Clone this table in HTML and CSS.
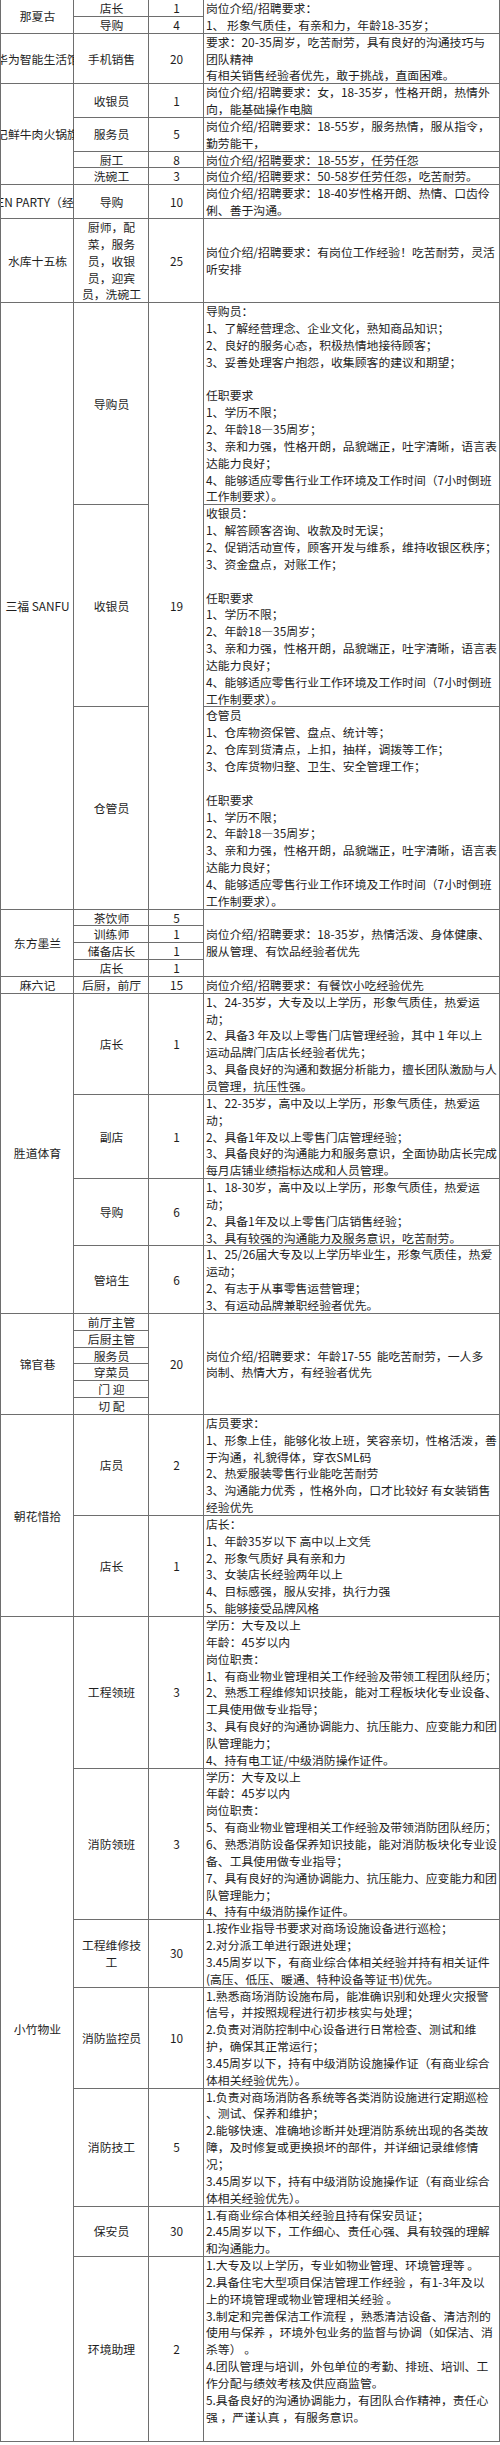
FILE: index.html
```html
<!DOCTYPE html>
<html lang="zh-CN">
<head>
<meta charset="utf-8">
<title>岗位招聘</title>
<link rel="stylesheet" href="styles.css">
</head>
<body>
<table class="jobs">
<colgroup><col class="c-brand"><col class="c-role"><col class="c-num"><col class="c-desc"></colgroup>
<tbody>
<tr>
<td class="brand" rowspan="2"><div class="clip"><span>那夏古</span></div></td>
<td class="role">店长</td><td class="num">1</td>
<td class="desc" rowspan="2">岗位介绍/招聘要求：<br>1、 形象气质佳，有亲和力，年龄18-35岁；</td>
</tr>
<tr><td class="role">导购</td><td class="num">4</td></tr>

<tr>
<td class="brand"><div class="clip"><span>华为智能生活馆</span></div></td>
<td class="role">手机销售</td><td class="num">20</td>
<td class="desc">要求：20-35周岁，吃苦耐劳，具有良好的沟通技巧与<br>团队精神<br>有相关销售经验者优先，敢于挑战，直面困难。</td>
</tr>

<tr>
<td class="brand" rowspan="4"><div class="clip"><span>潮汕记鲜牛肉火锅旗舰店</span></div></td>
<td class="role">收银员</td><td class="num">1</td>
<td class="desc">岗位介绍/招聘要求：女，18-35岁，性格开朗，热情外<br>向，能基础操作电脑</td>
</tr>
<tr>
<td class="role">服务员</td><td class="num">5</td>
<td class="desc">岗位介绍/招聘要求：18-55岁，服务热情，服从指令，<br>勤劳能干，</td>
</tr>
<tr>
<td class="role">厨工</td><td class="num">8</td>
<td class="desc">岗位介绍/招聘要求：18-55岁，任劳任怨</td>
</tr>
<tr>
<td class="role">洗碗工</td><td class="num">3</td>
<td class="desc">岗位介绍/招聘要求：50-58岁任劳任怨，吃苦耐劳。</td>
</tr>

<tr>
<td class="brand"><div class="clip"><span>GOLDEN PARTY（经开店）</span></div></td>
<td class="role">导购</td><td class="num">10</td>
<td class="desc">岗位介绍/招聘要求：18-40岁性格开朗、热情、口齿伶<br>俐、善于沟通。</td>
</tr>

<tr>
<td class="brand"><div class="clip"><span>水库十五栋</span></div></td>
<td class="role">厨师，配<br>菜，服务<br>员，收银<br>员，迎宾<br>员，洗碗工</td><td class="num">25</td>
<td class="desc">岗位介绍/招聘要求：有岗位工作经验！吃苦耐劳，灵活<br>听安排</td>
</tr>

<tr>
<td class="brand" rowspan="3"><div class="clip"><span>三福 SANFU</span></div></td>
<td class="role">导购员</td><td class="num" rowspan="3">19</td>
<td class="desc">导购员：<br>1、了解经营理念、企业文化，熟知商品知识；<br>2、良好的服务心态，积极热情地接待顾客；<br>3、妥善处理客户抱怨，收集顾客的建议和期望；<br><br>任职要求<br>1、学历不限；<br>2、年龄18—35周岁；<br>3、亲和力强，性格开朗，品貌端正，吐字清晰，语言表<br>达能力良好；<br>4、能够适应零售行业工作环境及工作时间（7小时倒班<br>工作制要求）。</td>
</tr>
<tr>
<td class="role">收银员</td>
<td class="desc">收银员：<br>1、解答顾客咨询、收款及时无误；<br>2、促销活动宣传，顾客开发与维系，维持收银区秩序；<br>3、资金盘点，对账工作；<br><br>任职要求<br>1、学历不限；<br>2、年龄18—35周岁；<br>3、亲和力强，性格开朗，品貌端正，吐字清晰，语言表<br>达能力良好；<br>4、能够适应零售行业工作环境及工作时间（7小时倒班<br>工作制要求）。</td>
</tr>
<tr>
<td class="role">仓管员</td>
<td class="desc">仓管员<br>1、仓库物资保管、盘点、统计等；<br>2、仓库到货清点，上扣，抽样，调拨等工作；<br>3、仓库货物归整、卫生、安全管理工作；<br><br>任职要求<br>1、学历不限；<br>2、年龄18—35周岁；<br>3、亲和力强，性格开朗，品貌端正，吐字清晰，语言表<br>达能力良好；<br>4、能够适应零售行业工作环境及工作时间（7小时倒班<br>工作制要求）。</td>
</tr>

<tr>
<td class="brand" rowspan="4"><div class="clip"><span>东方墨兰</span></div></td>
<td class="role">茶饮师</td><td class="num">5</td>
<td class="desc" rowspan="4">岗位介绍/招聘要求：18-35岁，热情活泼、身体健康、<br>服从管理、有饮品经验者优先</td>
</tr>
<tr><td class="role">训练师</td><td class="num">1</td></tr>
<tr><td class="role">储备店长</td><td class="num">1</td></tr>
<tr><td class="role">店长</td><td class="num">1</td></tr>

<tr>
<td class="brand"><div class="clip"><span>麻六记</span></div></td>
<td class="role">后厨，前厅</td><td class="num">15</td>
<td class="desc">岗位介绍/招聘要求：有餐饮小吃经验优先</td>
</tr>

<tr>
<td class="brand" rowspan="4"><div class="clip"><span>胜道体育</span></div></td>
<td class="role">店长</td><td class="num">1</td>
<td class="desc">1、24-35岁，大专及以上学历，形象气质佳，热爱运<br>动；<br>2、具备3 年及以上零售门店管理经验，其中 1 年以上<br>运动品牌门店店长经验者优先；<br>3、具备良好的沟通和数据分析能力，擅长团队激励与人<br>员管理，抗压性强。</td>
</tr>
<tr>
<td class="role">副店</td><td class="num">1</td>
<td class="desc">1、22-35岁，高中及以上学历，形象气质佳，热爱运<br>动；<br>2、具备1年及以上零售门店管理经验；<br>3、具备良好的沟通能力和服务意识，全面协助店长完成<br>每月店铺业绩指标达成和人员管理。</td>
</tr>
<tr>
<td class="role">导购</td><td class="num">6</td>
<td class="desc">1、18-30岁，高中及以上学历，形象气质佳，热爱运<br>动；<br>2、具备1年及以上零售门店销售经验；<br>3、具有较强的沟通能力及服务意识，吃苦耐劳。</td>
</tr>
<tr>
<td class="role">管培生</td><td class="num">6</td>
<td class="desc">1、25/26届大专及以上学历毕业生，形象气质佳，热爱<br>运动；<br>2、有志于从事零售运营管理；<br>3、有运动品牌兼职经验者优先。</td>
</tr>

<tr>
<td class="brand" rowspan="6"><div class="clip"><span>锦官巷</span></div></td>
<td class="role">前厅主管</td><td class="num" rowspan="6">20</td>
<td class="desc" rowspan="6">岗位介绍/招聘要求：年龄17-55&nbsp;&nbsp;能吃苦耐劳，一人多<br>岗制、热情大方，有经验者优先</td>
</tr>
<tr><td class="role">后厨主管</td></tr>
<tr><td class="role">服务员</td></tr>
<tr><td class="role">穿菜员</td></tr>
<tr><td class="role">门 迎</td></tr>
<tr><td class="role">切 配</td></tr>

<tr>
<td class="brand" rowspan="2"><div class="clip"><span>朝花惜拾</span></div></td>
<td class="role">店员</td><td class="num">2</td>
<td class="desc">店员要求：<br>1、形象上佳，能够化妆上班，笑容亲切，性格活泼，善<br>于沟通，礼貌得体，穿衣SML码<br>2、热爱服装零售行业能吃苦耐劳<br>3、沟通能力优秀 ，性格外向，口才比较好 有女装销售<br>经验优先</td>
</tr>
<tr>
<td class="role">店长</td><td class="num">1</td>
<td class="desc">店长：<br>1、年龄35岁以下 高中以上文凭<br>2、形象气质好 具有亲和力<br>3、女装店长经验两年以上<br>4、目标感强，服从安排，执行力强<br>5、能够接受品牌风格</td>
</tr>

<tr>
<td class="brand" rowspan="7"><div class="clip"><span>小竹物业</span></div></td>
<td class="role">工程领班</td><td class="num">3</td>
<td class="desc">学历：大专及以上<br>年龄：45岁以内<br>岗位职责：<br>1、有商业物业管理相关工作经验及带领工程团队经历；<br>2、熟悉工程维修知识技能，能对工程板块化专业设备、<br>工具使用做专业指导；<br>3、具有良好的沟通协调能力、抗压能力、应变能力和团<br>队管理能力；<br>4、持有电工证/中级消防操作证件。</td>
</tr>
<tr>
<td class="role">消防领班</td><td class="num">3</td>
<td class="desc">学历：大专及以上<br>年龄：45岁以内<br>岗位职责：<br>5、有商业物业管理相关工作经验及带领消防团队经历；<br>6、熟悉消防设备保养知识技能，能对消防板块化专业设<br>备、工具使用做专业指导；<br>7、具有良好的沟通协调能力、抗压能力、应变能力和团<br>队管理能力；<br>4、持有中级消防操作证件。</td>
</tr>
<tr>
<td class="role">工程维修技<br>工</td><td class="num">30</td>
<td class="desc">1.按作业指导书要求对商场设施设备进行巡检；<br>2.对分派工单进行跟进处理；<br>3.45周岁以下，有商业综合体相关经验并持有相关证件<br>(高压、低压、暖通、特种设备等证书)优先。</td>
</tr>
<tr>
<td class="role">消防监控员</td><td class="num">10</td>
<td class="desc">1.熟悉商场消防设施布局，能准确识别和处理火灾报警<br>信号，并按照规程进行初步核实与处理；<br>2.负责对消防控制中心设备进行日常检查、测试和维<br>护，确保其正常运行；<br>3.45周岁以下，持有中级消防设施操作证（有商业综合<br>体相关经验优先）。</td>
</tr>
<tr>
<td class="role">消防技工</td><td class="num">5</td>
<td class="desc">1.负责对商场消防各系统等各类消防设施进行定期巡检<br>、测试、保养和维护；<br>2.能够快速、准确地诊断并处理消防系统出现的各类故<br>障，及时修复或更换损坏的部件，并详细记录维修情<br>况；<br>3.45周岁以下，持有中级消防设施操作证（有商业综合<br>体相关经验优先）。</td>
</tr>
<tr>
<td class="role">保安员</td><td class="num">30</td>
<td class="desc">1.有商业综合体相关经验且持有保安员证；<br>2.45周岁以下，工作细心、责任心强、具有较强的理解<br>和沟通能力。</td>
</tr>
<tr>
<td class="role">环境助理</td><td class="num">2</td>
<td class="desc">1.大专及以上学历，专业如物业管理、环境管理等 。<br>2.具备住宅大型项目保洁管理工作经验 ，有1-3年及以<br>上的环境管理或物业管理相关经验 。<br>3.制定和完善保洁工作流程 ，熟悉清洁设备、清洁剂的<br>使用与保养 ，环境外包业务的监督与协调（如保洁、消<br>杀等） 。<br>4.团队管理与培训，外包单位的考勤、排班、培训、工<br>作分配与绩效考核及供应商监管。<br>5.具备良好的沟通协调能力，有团队合作精神，责任心<br>强 ，严谨认真 ，有服务意识。<br><br></td>
</tr>
</tbody>
</table>
</body>
</html>
```

FILE: styles.css
```css
html, body {
  margin: 0;
  padding: 0;
  background: #ffffff;
}

body {
  font-family: "Noto Sans CJK SC", "Microsoft YaHei", sans-serif;
  font-size: 11.85px;
  line-height: 16.84px;
  color: #1e1e1e;
}

.jobs {
  width: 500px;
  table-layout: fixed;
  border-collapse: separate;
  border-spacing: 0;
  border-left: 1px solid #6e6e6e;
}

.c-brand { width: 73px; }
.c-role  { width: 75px; }
.c-num   { width: 55px; }
.c-desc  { width: 296px; }

.jobs td {
  padding: 0;
  border: none;
  box-shadow: inset -1px -1px 0 #6e6e6e;
  text-align: center;
  vertical-align: middle;
  white-space: nowrap;
  overflow: hidden;
}

.jobs td.desc {
  text-align: left;
  padding-left: 2px;
}

.clip {
  display: flex;
  justify-content: center;
  overflow: hidden;
}

.clip span {
  flex: none;
}
```
